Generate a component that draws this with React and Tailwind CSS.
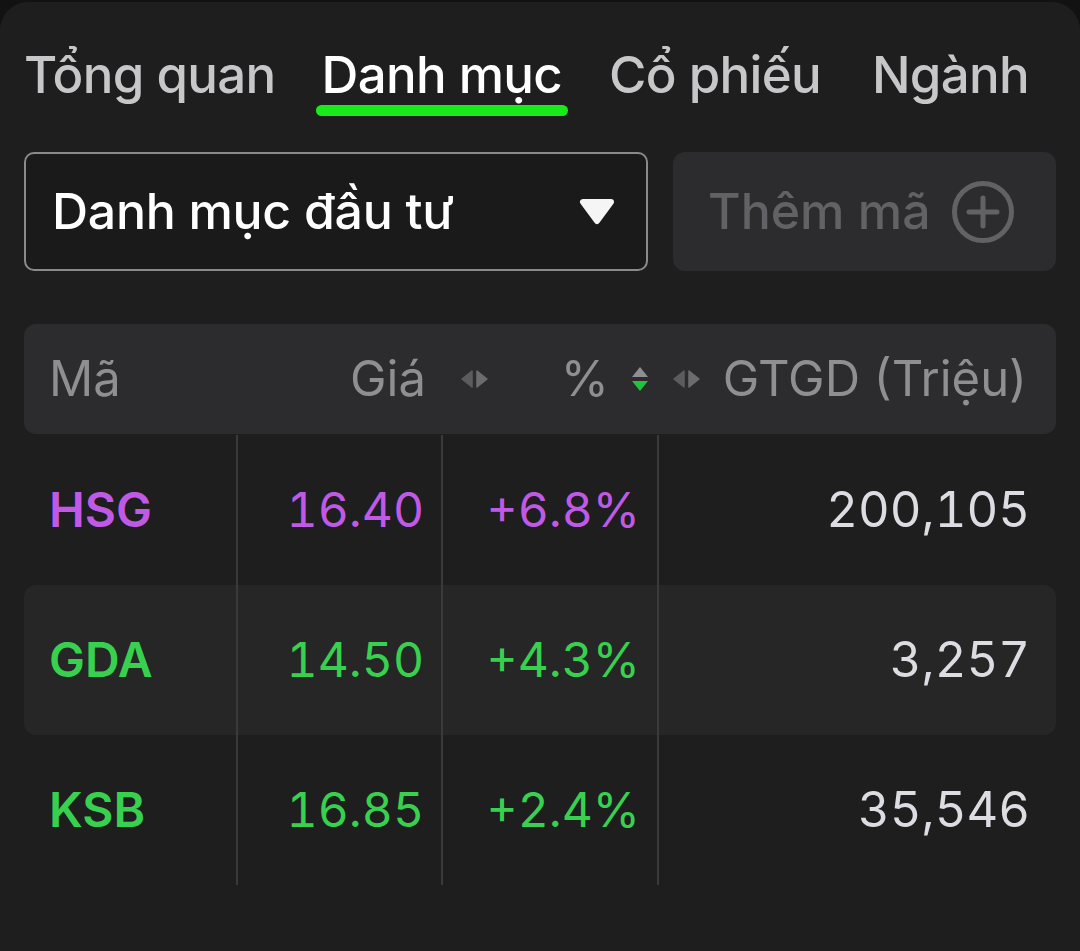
import React from 'react'

const font = { fontFamily: 'Inter, "Noto Sans", sans-serif' }

const rows = [
  { code: 'HSG', price: '16.40', pct: '+6.8%', value: '200,105', color: 'text-[#c05ae6]', hl: false },
  { code: 'GDA', price: '14.50', pct: '+4.3%', value: '3,257', color: 'text-[#38d14f]', hl: true },
  { code: 'KSB', price: '16.85', pct: '+2.4%', value: '35,546', color: 'text-[#38d14f]', hl: false },
]

function SortLR() {
  return (
    <svg width="30" height="20" viewBox="0 0 30 20">
      <path d="M12 2 L2 10 L12 18 Z" fill="#5c5c60" stroke="#5c5c60" strokeWidth="1.5" strokeLinejoin="round" />
      <path d="M17 2 L27 10 L17 18 Z" fill="#6c6c70" stroke="#6c6c70" strokeWidth="1.5" strokeLinejoin="round" />
    </svg>
  )
}

function SortUD() {
  return (
    <svg width="18" height="28" viewBox="0 0 18 28">
      <path d="M9 2 L17 12 L1 12 Z" fill="#8e8e93" />
      <path d="M1 16 L17 16 L9 26 Z" fill="#22c13e" />
    </svg>
  )
}

export default function App() {
  return (
    <div className="w-[1080px] h-[951px] bg-[#121212] pt-[2px]" style={font}>
      <div className="h-full bg-[#1e1e1e] rounded-t-[28px]">
        {/* tabs */}
        <div className="flex items-start pl-[24px] pt-[44px] h-[120px]">
          <div className="text-[51px] leading-[58px] font-medium text-[#c7c7c9] tracking-[-0.7px]">Tổng quan</div>
          <div className="flex flex-col ml-[46px]">
            <div className="text-[51px] leading-[58px] font-medium text-white tracking-[-0.7px]">Danh mục</div>
            <div className="mt-[1px] -mx-[6px] h-[11px] rounded-full bg-[#19ea19]"></div>
          </div>
          <div className="ml-[47px] text-[51px] leading-[58px] font-medium text-[#c7c7c9] tracking-[-0.7px]">Cổ phiếu</div>
          <div className="ml-[51px] text-[51px] leading-[58px] font-medium text-[#c7c7c9] tracking-[-0.7px]">Ngành</div>
        </div>

        {/* selector + add */}
        <div className="flex gap-[25px] px-[24px] mt-[30px]">
          <div className="w-[624px] h-[119px] rounded-[10px] border-2 border-[#8a8a8c] bg-[#1a1a1a] flex items-center justify-between pl-[26px] pr-[30px]">
            <span className="text-[50px] font-medium text-white tracking-[-0.3px]">Danh mục đầu tư</span>
            <svg width="38" height="28" viewBox="0 0 38 28">
              <path d="M5 4 L33 4 L19 23 Z" fill="#f5f5f5" stroke="#f5f5f5" strokeWidth="6" strokeLinejoin="round" />
            </svg>
          </div>
          <div className="flex-1 h-[119px] rounded-[12px] bg-[#2c2c2e] flex items-center pl-[35px] gap-[19px]">
            <span className="text-[50px] font-medium text-[#626266]">Thêm mã</span>
            <svg width="66" height="66" viewBox="0 0 66 66">
              <circle cx="33" cy="33" r="28.5" fill="none" stroke="#626266" strokeWidth="5" />
              <path d="M33 19 V47 M19 33 H47" stroke="#626266" strokeWidth="5" strokeLinecap="round" />
            </svg>
          </div>
        </div>

        {/* table header */}
        <div className="mx-[24px] mt-[53px] h-[110px] rounded-[12px] bg-[#2c2c2e] flex items-center pl-[25px] pr-[29px] text-[49px] text-[#8e8e93]">
          <div className="w-[377px] flex justify-between">
            <span>Mã</span>
            <span>Giá</span>
          </div>
          <div className="ml-[34px]">
            <SortLR />
          </div>
          <div className="ml-auto flex items-center">
            <span>%</span>
            <div className="ml-[22px]">
              <SortUD />
            </div>
            <div className="ml-[23px]">
              <SortLR />
            </div>
            <span className="ml-[21px]">GTGD (Triệu)</span>
          </div>
        </div>

        {/* rows */}
        <div className="mx-[24px] mt-[1px] tabular-nums">
          {rows.map((r) => (
            <div
              key={r.code}
              className={`grid grid-cols-[214px_205px_216px_1fr] h-[150px] rounded-[12px] ${r.hl ? 'bg-[#262626]' : ''}`}
            >
              <div className={`border-r-2 border-[#3a3a3c] flex items-center pl-[25px] text-[48px] font-semibold ${r.color}`}>
                {r.code}
              </div>
              <div className={`border-r-2 border-[#3a3a3c] flex items-center justify-end pr-[17px] text-[48px] ${r.color}`}>
                {r.price}
              </div>
              <div className={`border-r-2 border-[#3a3a3c] flex items-center justify-end pr-[17px] text-[48px] ${r.color}`}>
                {r.pct}
              </div>
              <div className="flex items-center justify-end pr-[26px] text-[49px] text-[#dcdce2]">
                {r.value}
              </div>
            </div>
          ))}
        </div>
      </div>
    </div>
  )
}
